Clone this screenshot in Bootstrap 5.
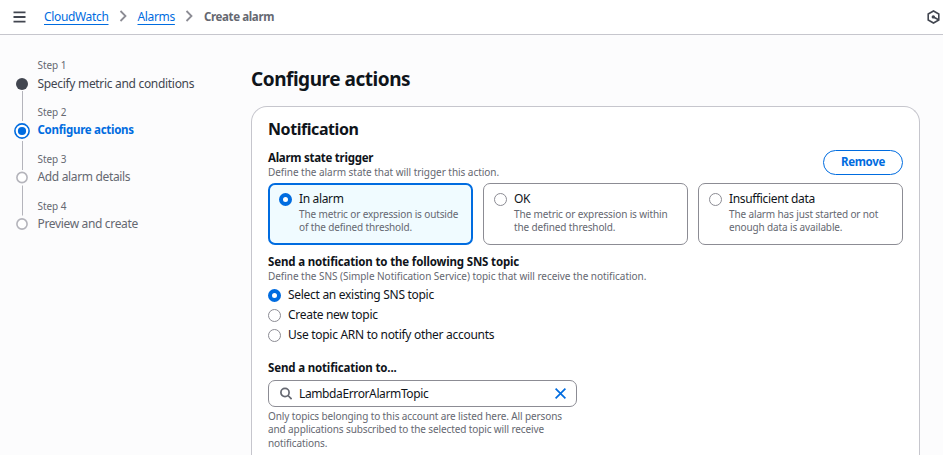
<!DOCTYPE html>
<html lang="en">
<head>
<meta charset="utf-8">
<meta name="viewport" content="width=device-width, initial-scale=1">
<title>Create alarm</title>
<link href="https://cdn.jsdelivr.net/npm/bootstrap@5.3.0/dist/css/bootstrap.min.css" rel="stylesheet">
<style>
  body { font-family: "Noto Sans", "Open Sans", sans-serif; font-size: 12px; line-height: 16px; letter-spacing: -.34px; color: #0f141a; background: #fcfcfd; }
  .topbar { height: 35px; border-bottom: 1px solid #c6c6cd; padding: 0 3px 1px 13px; }
  .topbar a { color: #006ce0; text-underline-offset: 3px; }
  .menu-icon { margin-right: 18px; }
  .crumb-sep { margin: 0 11px 2px 10px; }
  .here { color: #656871; font-size: 11.5px; font-weight: 700; letter-spacing: -.36px; }
  .steps { width: 251px; padding: 24px 0 0 13px; }
  .step { height: 47px; }
  .step-rail { width: 18px; margin-right: 6.5px; }
  .step-rail svg { display: block; overflow: visible; }
  .hint { font-size: 10px; line-height: 13px; letter-spacing: -.04px; color: #656871; }
  .step-name { color: #656871; margin-top: 3px; }
  .step-name.done { color: #424650; letter-spacing: -.31px; margin-top: 4px; }
  .step-name.current { color: #006ce0; font-size: 11.5px; font-weight: 700; letter-spacing: -.29px; }
  .content { width: 669px; padding-top: 31px; }
  h1 { font-size: 19px; line-height: 26px; font-weight: 700; letter-spacing: -.47px; margin: 0 0 14px; }
  .panel { border: 1px solid #c6c6cd; border-bottom: 0; border-radius: 16px 16px 0 0; padding: 11px 16px 0; height: 349px; background: #fff; }
  h2 { font-size: 16px; line-height: 22px; font-weight: 700; letter-spacing: -.44px; margin: 0 0 10px; }
  .field-label { font-size: 11.5px; font-weight: 700; letter-spacing: -.16px; }
  .field-label.tight { letter-spacing: -.27px; }
  .btn-remove { width: 80px; height: 25px; padding: 0 0 1px; border: 1.5px solid #006ce0; border-radius: 20px; color: #006ce0; font-size: 11.5px; font-weight: 700; line-height: 20px; letter-spacing: -.33px; }
  .field-head { height: 33px; }
  .tiles { gap: 10px; margin-bottom: 9px; }
  .tile { flex: 1 1 0; height: 62px; border: 1px solid #8c8c94; border-radius: 7px; padding: 7px 10px; }
  .tile.selected { border: 2px solid #006ce0; background: #f0fbff; padding: 6px 9px; }
  .dot { appearance: none; flex: none; width: 13px; height: 13px; margin: 2px 7px 0 0; border: 1px solid #8c8c94; border-radius: 50%; background: #fff; }
  .dot:checked { border: 4px solid #006ce0; }
  .tile .hint { letter-spacing: -.13px; margin-top: 1px; }
  .choice { height: 20px; letter-spacing: -.29px; }
  .choices { margin: 4px 0 13px; padding-top: 0; }
  .search { width: 309px; height: 27px; margin-top: 4px; padding: 0 10px 0 11px; border: 1px solid #8c8c94; border-radius: 7px; letter-spacing: -.38px; }
  .search-icon { margin-right: 7px; }
  .search-help { line-height: 13.4px; letter-spacing: -.11px; margin-top: 3px; }
</style>
<script src="https://cdn.jsdelivr.net/npm/bootstrap@5.3.0/dist/js/bootstrap.bundle.min.js"></script>
</head>
<body>
<header class="topbar d-flex align-items-center bg-white">
  <svg class="menu-icon" width="13" height="12" viewBox="0 0 13 12" stroke="#424650" stroke-width="1.8"><path d="M.5 1.3h12M.5 6h12M.5 10.7h12"/></svg>
  <a href="#">CloudWatch</a>
  <svg class="crumb-sep" width="8" height="12" viewBox="0 0 8 12" fill="none" stroke="#8c8c94" stroke-width="1.8"><path d="M1.5 1l5 5-5 5"/></svg>
  <a href="#">Alarms</a>
  <svg class="crumb-sep" width="8" height="12" viewBox="0 0 8 12" fill="none" stroke="#8c8c94" stroke-width="1.8"><path d="M1.5 1l5 5-5 5"/></svg>
  <span class="here">Create alarm</span>
  <svg class="ms-auto" width="13" height="14" viewBox="0 0 13 14" fill="none" stroke="#424650" stroke-width="1.6"><path d="M6.5 1l5.3 3v6l-5.3 3-5.3-3V4zM6.5 7l5 2.8"/><circle cx="6.3" cy="6.9" r="1.7" fill="#424650" stroke="none"/></svg>
</header>
<div class="d-flex">
  <nav class="steps">
    <div class="step d-flex">
      <div class="step-rail"><svg width="18" height="47"><path d="M9.5 32v30" stroke="#b4b4bb"/><circle cx="9" cy="25" r="6" fill="#424650"/></svg></div>
      <div><div class="hint">Step 1</div><div class="step-name done">Specify metric and conditions</div></div>
    </div>
    <div class="step d-flex">
      <div class="step-rail"><svg width="18" height="47"><path d="M9.5 35v29" stroke="#b4b4bb"/><circle cx="9" cy="25" r="7.1" fill="#fff" stroke="#006ce0" stroke-width="1.6"/><circle cx="9" cy="25" r="4.1" fill="#006ce0"/></svg></div>
      <div><div class="hint">Step 2</div><div class="step-name current">Configure actions</div></div>
    </div>
    <div class="step d-flex">
      <div class="step-rail"><svg width="18" height="47"><path d="M9.5 32.5v30" stroke="#b4b4bb"/><circle cx="9" cy="24.5" r="5.1" fill="#fff" stroke="#b4b4bb" stroke-width="1.6"/></svg></div>
      <div><div class="hint">Step 3</div><div class="step-name">Add alarm details</div></div>
    </div>
    <div class="step d-flex">
      <div class="step-rail"><svg width="18" height="47"><circle cx="9" cy="24" r="5.1" fill="#fff" stroke="#b4b4bb" stroke-width="1.6"/></svg></div>
      <div><div class="hint">Step 4</div><div class="step-name">Preview and create</div></div>
    </div>
  </nav>
  <main class="content">
    <h1>Configure actions</h1>
    <section class="panel">
      <h2>Notification</h2>
      <div class="field-head d-flex justify-content-between">
        <div>
          <div class="field-label tight">Alarm state trigger</div>
          <div class="hint">Define the alarm state that will trigger this action.</div>
        </div>
        <button class="btn btn-remove">Remove</button>
      </div>
      <div class="tiles d-flex">
        <label class="tile selected d-flex align-items-start"><input class="dot" type="radio" name="state" checked><span>In alarm<span class="hint d-block">The metric or expression is outside<br>of the defined threshold.</span></span></label>
        <label class="tile d-flex align-items-start"><input class="dot" type="radio" name="state"><span>OK<span class="hint d-block">The metric or expression is within<br>the defined threshold.</span></span></label>
        <label class="tile d-flex align-items-start"><input class="dot" type="radio" name="state"><span>Insufficient data<span class="hint d-block">The alarm has just started or not<br>enough data is available.</span></span></label>
      </div>
      <div class="field-label">Send a notification to the following SNS topic</div>
      <div class="hint">Define the SNS (Simple Notification Service) topic that will receive the notification.</div>
      <div class="choices">
        <label class="choice d-flex align-items-start"><input class="dot" type="radio" name="topic" checked>Select an existing SNS topic</label>
        <label class="choice d-flex align-items-start"><input class="dot" type="radio" name="topic">Create new topic</label>
        <label class="choice d-flex align-items-start"><input class="dot" type="radio" name="topic">Use topic ARN to notify other accounts</label>
      </div>
      <div class="field-label">Send a notification to...</div>
      <div class="search d-flex align-items-center">
        <svg class="search-icon" width="12" height="13" viewBox="0 0 12 13" fill="none" stroke="#656871" stroke-width="1.7"><circle cx="5" cy="5.5" r="4.1"/><path d="M8 8.5l3.6 3.6"/></svg>
        <span>LambdaErrorAlarmTopic</span>
        <svg class="ms-auto" width="11" height="11" viewBox="0 0 11 11" stroke="#006ce0" stroke-width="1.7"><path d="M.6.6l9.8 9.8M10.4.6L.6 10.4"/></svg>
      </div>
      <div class="hint search-help">Only topics belonging to this account are listed here. All persons<br>and applications subscribed to the selected topic will receive<br>notifications.</div>
    </section>
  </main>
</div>
</body>
</html>
